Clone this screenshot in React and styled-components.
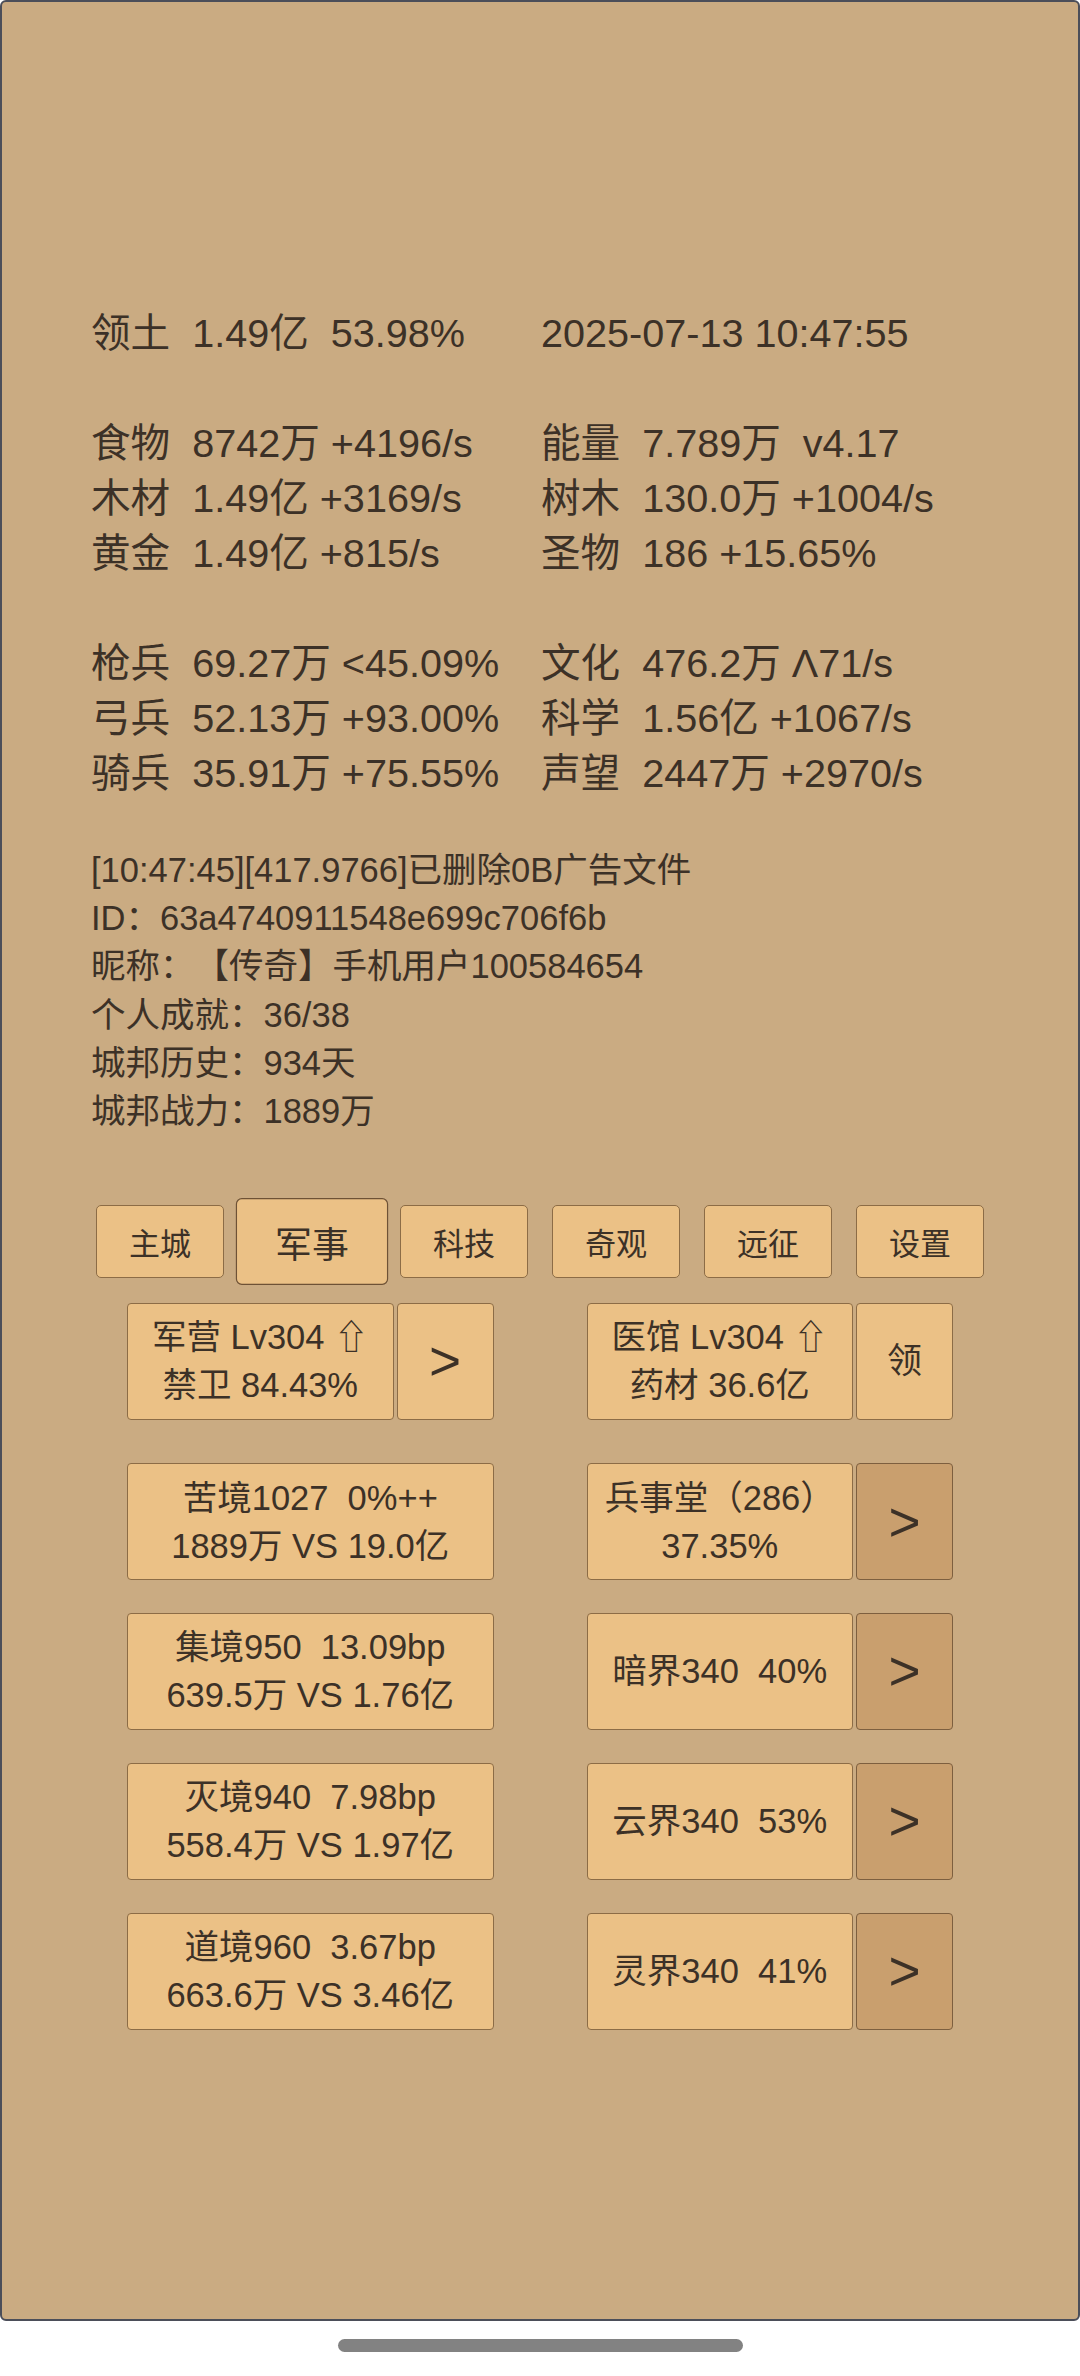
import React from 'react';
import styled, { createGlobalStyle } from 'styled-components';

const GlobalStyle = createGlobalStyle`
  html, body {
    margin: 0;
    padding: 0;
    background: #ffffff;
  }
  body {
    font-family: "Liberation Sans", "Noto Sans CJK SC", "DejaVu Sans", sans-serif;
    color: #3c3127;
    text-spacing-trim: space-all;
  }
`;

const Screen = styled.div`
  width: 1080px;
  height: 2376px;
  display: flex;
  flex-direction: column;
  align-items: center;
`;

const Frame = styled.div`
  box-sizing: border-box;
  width: 1080px;
  height: 2321px;
  border: 2px solid #4b4e59;
  border-radius: 6px;
  background: #caab82;
  padding-top: 304px;
`;

const TextArea = styled.div`
  padding-left: 89px;
`;

const StatGroup = styled.div`
  display: grid;
  grid-template-columns: 450px auto;
  font-size: 39.6px;
  line-height: 55px;
  white-space: pre;
  margin-bottom: ${(p) => (p.$last ? 0 : 55)}px;
`;

const Log = styled.div`
  margin-top: 45px;
  font-size: 34.5px;
  line-height: 48.2px;
  white-space: pre;
`;

const Tabs = styled.div`
  display: flex;
  justify-content: center;
  gap: 24px;
  margin-top: 69.5px;
`;

const Tab = styled.div`
  box-sizing: border-box;
  width: 128px;
  height: 73px;
  display: flex;
  align-items: center;
  justify-content: center;
  background: #ebc186;
  border: 1.5px solid ${(p) => (p.$active ? '#6e5236' : '#8c6c46')};
  border-radius: 5px;
  font-size: 31px;
  transform: ${(p) => (p.$active ? 'scale(1.19)' : 'none')};
`;

const Grid = styled.div`
  display: grid;
  grid-template-columns: repeat(2, 366.5px);
  column-gap: 93px;
  justify-content: center;
  margin-top: ${(p) => p.$top}px;
`;

const Cell = styled.div`
  display: flex;
  gap: 3px;
  height: 117px;
`;

const Box = styled.div`
  box-sizing: border-box;
  flex: 1;
  display: flex;
  flex-direction: column;
  align-items: center;
  justify-content: center;
  background: ${(p) => (p.$dark ? '#c99f6e' : '#ebc186')};
  border: 1.5px solid ${(p) => (p.$dark ? '#7d5f3f' : '#8c6c46')};
  border-radius: 4px;
  font-size: 34.5px;
  line-height: 48px;
  white-space: pre;
  text-align: center;
`;

const Side = styled(Box)`
  flex: 0 0 97px;
  font-size: ${(p) => (p.$arrow ? 55 : 35)}px;
`;

const HomeBar = styled.div`
  margin-top: 18px;
  width: 405px;
  height: 13px;
  border-radius: 7px;
  background: #828282;
`;

const stats = [
  [['领土  1.49亿  53.98%', '2025-07-13 10:47:55']],
  [
    ['食物  8742万 +4196/s', '能量  7.789万  v4.17'],
    ['木材  1.49亿 +3169/s', '树木  130.0万 +1004/s'],
    ['黄金  1.49亿 +815/s', '圣物  186 +15.65%'],
  ],
  [
    ['枪兵  69.27万 <45.09%', '文化  476.2万 Λ71/s'],
    ['弓兵  52.13万 +93.00%', '科学  1.56亿 +1067/s'],
    ['骑兵  35.91万 +75.55%', '声望  2447万 +2970/s'],
  ],
];

const logLines = [
  '[10:47:45][417.9766]已删除0B广告文件',
  'ID：63a4740911548e699c706f6b',
  '昵称：【传奇】手机用户100584654',
  '个人成就：36/38',
  '城邦历史：934天',
  '城邦战力：1889万',
];

const tabs = ['主城', '军事', '科技', '奇观', '远征', '设置'];

const realms = [
  { left: ['集境950  13.09bp', '639.5万 VS 1.76亿'], right: '暗界340  40%' },
  { left: ['灭境940  7.98bp', '558.4万 VS 1.97亿'], right: '云界340  53%' },
  { left: ['道境960  3.67bp', '663.6万 VS 3.46亿'], right: '灵界340  41%' },
];

export default function App() {
  return (
    <Screen>
      <GlobalStyle />
      <Frame>
        <TextArea>
          {stats.map((group, gi) => (
            <StatGroup key={gi} $last={gi === stats.length - 1}>
              {group.map(([a, b], ri) => (
                <React.Fragment key={ri}>
                  <span>{a}</span>
                  <span>{b}</span>
                </React.Fragment>
              ))}
            </StatGroup>
          ))}
          <Log>
            {logLines.map((l) => (
              <div key={l}>{l}</div>
            ))}
          </Log>
        </TextArea>

        <Tabs>
          {tabs.map((t) => (
            <Tab key={t} $active={t === '军事'}>
              {t}
            </Tab>
          ))}
        </Tabs>

        <Grid $top={25}>
          <Cell>
            <Box>
              <div>军营 Lv304 ⇧</div>
              <div>禁卫 84.43%</div>
            </Box>
            <Side $arrow>&gt;</Side>
          </Cell>
          <Cell>
            <Box>
              <div>医馆 Lv304 ⇧</div>
              <div>药材 36.6亿</div>
            </Box>
            <Side>领</Side>
          </Cell>
        </Grid>

        <Grid $top={43.4}>
          <Cell>
            <Box>
              <div>苦境1027  0%++</div>
              <div>1889万 VS 19.0亿</div>
            </Box>
          </Cell>
          <Cell>
            <Box>
              <div>兵事堂（286）</div>
              <div>37.35%</div>
            </Box>
            <Side $arrow $dark>&gt;</Side>
          </Cell>
        </Grid>

        {realms.map((r) => (
          <Grid key={r.right} $top={32.8}>
            <Cell>
              <Box>
                <div>{r.left[0]}</div>
                <div>{r.left[1]}</div>
              </Box>
            </Cell>
            <Cell>
              <Box>
                <div>{r.right}</div>
              </Box>
              <Side $arrow $dark>&gt;</Side>
            </Cell>
          </Grid>
        ))}
      </Frame>
      <HomeBar />
    </Screen>
  );
}
